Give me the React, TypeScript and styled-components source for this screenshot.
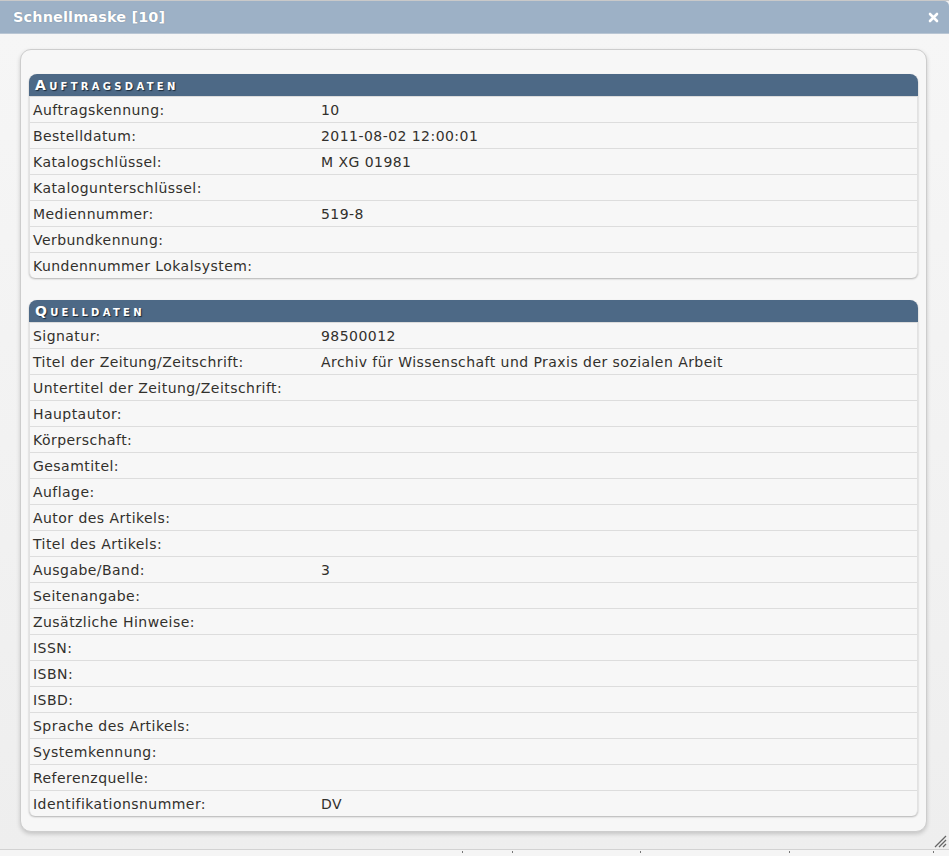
import React from "react";
import styled, { createGlobalStyle } from "styled-components";

const Global = createGlobalStyle`
  html, body { margin: 0; padding: 0; }
  body { background: #f2f2f2; font-family: "DejaVu Sans", Verdana, sans-serif; }
`;

const Dialog = styled.div`
  width: 949px;
  height: 856px;
  display: flex;
  flex-direction: column;
  box-sizing: border-box;
  border-top: 1px solid #c9c9c9;
  background: linear-gradient(to right, #e9e9e9 0px, #f0f0f0 4px, #f0f0f0 100%);
`;

const TitleBar = styled.div`
  height: 32px;
  flex: none;
  display: flex;
  align-items: center;
  justify-content: space-between;
  padding: 0 9px 0 13px;
  background: #9db1c6;
  border-top-right-radius: 5px;
  border-bottom: 1px solid #b9c6d4;
`;

const Title = styled.span`
  color: #fff;
  font-weight: bold;
  font-size: 14.5px;
  text-shadow: 0 0 1px rgba(60, 80, 100, 0.6);
  letter-spacing: 0.1px;
`;

const CloseBtn = styled.span`
  display: flex;
  width: 14px;
  height: 14px;
  align-items: center;
  justify-content: center;
`;

const Content = styled.div`
  flex: 1;
  display: flex;
  flex-direction: column;
  padding: 15px 22px 0 20px;
  background: linear-gradient(to bottom, #f6f6f6 0%, #eeeeee 100%);
  position: relative;
`;

const Panel = styled.div`
  background: #f7f7f7;
  border: 1px solid #cdcdcd;
  border-radius: 11px;
  box-shadow: 0 2px 4px rgba(0, 0, 0, 0.18);
  padding: 24px 8px 15px 8px;
  display: flex;
  flex-direction: column;
  gap: 22px;
`;

const Section = styled.div`
  border-radius: 8px 8px 6px 6px;
  background: #f7f7f7;
  box-shadow: 0 1px 2px rgba(0, 0, 0, 0.28);
  border-left: 1px solid #e2e2e2;
  border-right: 1px solid #e2e2e2;
`;

const SectionHead = styled.div`
  height: 22px;
  margin: 0 -1px;
  background: #4d6986;
  border-radius: 8px 8px 0 0;
  display: flex;
  align-items: center;
  padding-left: 6px;
  color: #fff;
  font-weight: bold;
  font-variant: small-caps;
  font-size: 14px;
  letter-spacing: 3.3px;
  text-shadow: 1px 1px 1px #1c2a38;
  border-bottom: 1px solid #dcdcdc;
`;

const Row = styled.div<{ $last?: boolean }>`
  display: grid;
  grid-template-columns: 288px 1fr;
  height: 25px;
  align-items: center;
  padding-left: 3px;
  border-bottom: ${(p) => (p.$last ? "none" : "1px solid #dddddd")};
  font-size: 14px;
  letter-spacing: 0.45px;
  color: #32302c;
`;

const Cell = styled.span`
  white-space: nowrap;
`;

const Footer = styled.div`
  height: 6px;
  flex: none;
  border-top: 1px solid #d2d2d2;
  background: #f5f5f5;
  position: relative;
`;

const Tick = styled.span<{ $x: number }>`
  position: absolute;
  top: 1px;
  left: ${(p) => p.$x}px;
  width: 1px;
  height: 2px;
  background: #777;
`;

const Grip = styled.svg`
  position: absolute;
  right: 2px;
  bottom: 1px;
`;

type Item = [string, string];

const auftrag: Item[] = [
  ["Auftragskennung:", "10"],
  ["Bestelldatum:", "2011-08-02 12:00:01"],
  ["Katalogschlüssel:", "M XG 01981"],
  ["Katalogunterschlüssel:", ""],
  ["Mediennummer:", "519-8"],
  ["Verbundkennung:", ""],
  ["Kundennummer Lokalsystem:", ""],
];

const quell: Item[] = [
  ["Signatur:", "98500012"],
  ["Titel der Zeitung/Zeitschrift:", "Archiv für Wissenschaft und Praxis der sozialen Arbeit"],
  ["Untertitel der Zeitung/Zeitschrift:", ""],
  ["Hauptautor:", ""],
  ["Körperschaft:", ""],
  ["Gesamtitel:", ""],
  ["Auflage:", ""],
  ["Autor des Artikels:", ""],
  ["Titel des Artikels:", ""],
  ["Ausgabe/Band:", "3"],
  ["Seitenangabe:", ""],
  ["Zusätzliche Hinweise:", ""],
  ["ISSN:", ""],
  ["ISBN:", ""],
  ["ISBD:", ""],
  ["Sprache des Artikels:", ""],
  ["Systemkennung:", ""],
  ["Referenzquelle:", ""],
  ["Identifikationsnummer:", "DV"],
];

function Block({ title, items }: { title: string; items: Item[] }) {
  return (
    <Section>
      <SectionHead>{title}</SectionHead>
      {items.map(([k, v], i) => (
        <Row key={k} $last={i === items.length - 1}>
          <Cell>{k}</Cell>
          <Cell>{v}</Cell>
        </Row>
      ))}
    </Section>
  );
}

export default function App() {
  return (
    <>
      <Global />
      <Dialog>
        <TitleBar>
          <Title>Schnellmaske [10]</Title>
          <CloseBtn>
            <svg width="11" height="11" viewBox="0 0 11 11">
              <path d="M2 2 L9 9 M9 2 L2 9" stroke="#fff" strokeWidth="2.6" strokeLinecap="round" />
            </svg>
          </CloseBtn>
        </TitleBar>
        <Content>
          <Panel>
            <Block title="Auftragsdaten" items={auftrag} />
            <Block title="Quelldaten" items={quell} />
          </Panel>
          <Grip width="13" height="13" viewBox="0 0 13 13">
            <path d="M12 1 L1 12 M12 5 L5 12 M12 9 L9 12" stroke="#666" strokeWidth="1.3" />
          </Grip>
        </Content>
        <Footer>
          {[462, 512, 640, 789, 933].map((x) => (
            <Tick key={x} $x={x} />
          ))}
        </Footer>
      </Dialog>
    </>
  );
}
